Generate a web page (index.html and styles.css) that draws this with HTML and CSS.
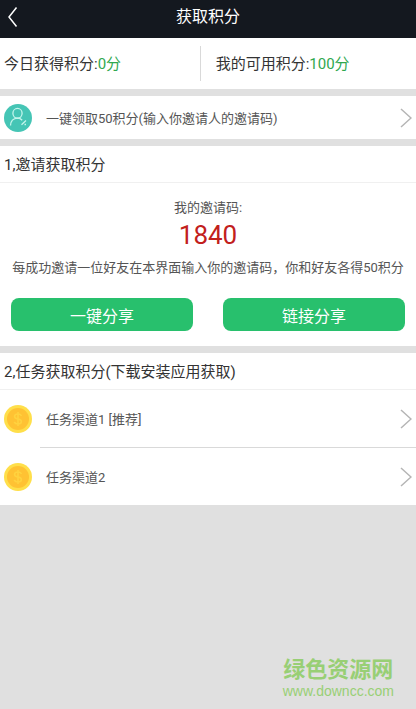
FILE: index.html
```html
<!DOCTYPE html>
<html lang="zh-CN">
<head>
<meta charset="utf-8">
<meta name="viewport" content="width=device-width, initial-scale=1">
<title>获取积分</title>
<link rel="stylesheet" href="styles.css">
</head>
<body>
<header class="topbar">
  <button class="back" type="button" aria-label="返回">
    <svg width="10" height="20" viewBox="0 0 10 20"><path d="M8.5 .5 1 10l7.500 9.500"/></svg>
  </button>
  <h1 class="title">获取积分</h1>
</header>
<main class="content">
  <section class="stats">
    <p class="stat">今日获得积分:<span class="points">0分</span></p>
    <p class="stat">我的可用积分:<span class="points">100分</span></p>
  </section>

  <a class="row row-claim" href="#claim">
    <svg class="icon" viewBox="0 0 28 28">
      <circle class="teal" cx="14" cy="14" r="14"/>
      <g class="person">
        <ellipse cx="13.500" cy="9.300" rx="4.600" ry="4.900"/>
        <path d="M6.500 21.500c.2-4.200 2.200-7 7-7.300 2 0 3.500.7 4.700 2M17.500 20.800l4.500-4.300M20.500 20.500h1.500"/>
      </g>
    </svg>
    <span class="label">一键领取50积分(输入你邀请人的邀请码)</span>
    <svg class="chevron" viewBox="0 0 12 20"><path d="m1 1 10 9L1 19"/></svg>
  </a>

  <section class="panel">
    <h2 class="heading">1,邀请获取积分</h2>
    <div class="invite">
      <p class="note">我的邀请码:</p>
      <p class="code">1840</p>
      <p class="note">每成功邀请一位好友在本界面输入你的邀请码，你和好友各得50积分</p>
      <div class="actions">
        <button class="share" type="button">一键分享</button>
        <button class="share" type="button">链接分享</button>
      </div>
    </div>
  </section>

  <section class="panel">
    <h2 class="heading">2,任务获取积分(下载安装应用获取)</h2>
    <a class="row" href="#channel-1">
      <svg class="icon" viewBox="0 0 28 28">
        <circle class="coin-rim" cx="14" cy="14" r="14"/>
        <circle class="coin" cx="14" cy="14" r="11"/>
        <path class="dollar" d="M17.500 10.800c-.7-1.200-1.900-1.800-3.500-1.800-4.300 0-4.700 4.200-.3 4.900 5 .8 4.700 5.100.3 5.100-1.800 0-3.100-.7-3.800-2M14 7v14"/>
      </svg>
      <span class="label">任务渠道1 [推荐]</span>
      <svg class="chevron" viewBox="0 0 12 20"><path d="m1 1 10 9L1 19"/></svg>
    </a>
    <hr class="divider">
    <a class="row" href="#channel-2">
      <svg class="icon" viewBox="0 0 28 28">
        <circle class="coin-rim" cx="14" cy="14" r="14"/>
        <circle class="coin" cx="14" cy="14" r="11"/>
        <path class="dollar" d="M17.500 10.800c-.7-1.200-1.900-1.800-3.500-1.800-4.300 0-4.700 4.200-.3 4.900 5 .8 4.700 5.100.3 5.100-1.800 0-3.100-.7-3.800-2M14 7v14"/>
      </svg>
      <span class="label">任务渠道2</span>
      <svg class="chevron" viewBox="0 0 12 20"><path d="m1 1 10 9L1 19"/></svg>
    </a>
  </section>
</main>
<footer class="brand">
  <p class="brand-name">绿色资源网</p>
  <p class="brand-url">www.downcc.com</p>
</footer>
</body>
</html>
```
FILE: styles.css
```css
* {
  box-sizing: border-box;
}

body {
  margin: 0;
  min-height: 100vh;
  display: flex;
  flex-direction: column;
  background: #e0e0e0;
  color: #333;
  font-family: Roboto, "Noto Sans CJK SC", sans-serif;
  font-size: 15px;
}

h1, h2, p {
  margin: 0;
  font-weight: 400;
}

button {
  border: 0;
  font: inherit;
}

svg {
  flex: none;
  fill: none;
}

.topbar {
  display: grid;
  grid-template-columns: 32px 1fr 32px;
  align-items: center;
  height: 38px;
  padding-bottom: 5px;
  background: #14181f;
  color: #fff;
}

.back {
  display: flex;
  padding: 0 8px;
  background: none;
}

.back svg {
  stroke: #fff;
  stroke-width: 1.5;
}

.title {
  font-size: 16px;
  line-height: 24px;
  text-align: center;
}

.content {
  display: flex;
  flex-direction: column;
  gap: 7px;
}

.stats {
  display: grid;
  grid-template-columns: 48fr 52fr;
  padding: 8px 0;
  background: #fff;
}

.stat {
  padding: 2px 0 0 4px;
  line-height: 33px;
}

.stat + .stat {
  padding-left: 15px;
  border-left: 1px solid #d9d9d9;
}

.points {
  color: #2fa84f;
}

.row {
  display: flex;
  align-items: center;
  height: 57px;
  padding: 0 4px;
  background: #fff;
  color: #555;
  font-size: 13px;
  text-decoration: none;
}

.row-claim {
  height: 43px;
}

.icon {
  width: 28px;
  height: 28px;
}

.label {
  flex: 1;
  margin-left: 14px;
}

.chevron {
  width: 12px;
  height: 20px;
  stroke: #b5b5b5;
  stroke-width: 1.5;
}

.teal {
  fill: #45c5b5;
}

.person {
  stroke: #c4f5ec;
  stroke-width: 1.3;
}

.coin-rim {
  fill: #ffdf4a;
}

.coin {
  fill: #ffc233;
}

.dollar {
  stroke: #ffd23f;
  stroke-width: 1.6;
}

.panel {
  background: #fff;
}

.heading {
  border-bottom: 1px solid #f0f0f0;
  padding: 2px 4px 0;
  font-size: 15px;
  line-height: 34px;
}

.invite {
  padding: 15px 11px;
  text-align: center;
}

.note {
  color: #555;
  font-size: 13px;
  line-height: 20px;
}

.code {
  color: #c2201c;
  font-size: 26px;
  line-height: 34px;
  margin-bottom: 6px;
}

.actions {
  display: grid;
  grid-template-columns: 1fr 1fr;
  gap: 30px;
  margin-top: 20px;
}

.share {
  height: 33px;
  padding: 0;
  border-radius: 8px;
  background: #28c06d;
  color: #fff;
  font-size: 16px;
}

.divider {
  margin: 0;
  border: 0;
  border-left: 40px solid #fff;
  height: 1px;
  background: #d9d9d9;
}

.brand {
  margin-top: auto;
  align-self: flex-end;
  padding: 0 22px 9px 0;
  color: #98cf75;
  text-align: center;
}

.brand-name {
  font-size: 22px;
  font-weight: 700;
  line-height: 24px;
}

.brand-url {
  font-family: "Liberation Sans", sans-serif;
  font-size: 14px;
  line-height: 18px;
}
```
